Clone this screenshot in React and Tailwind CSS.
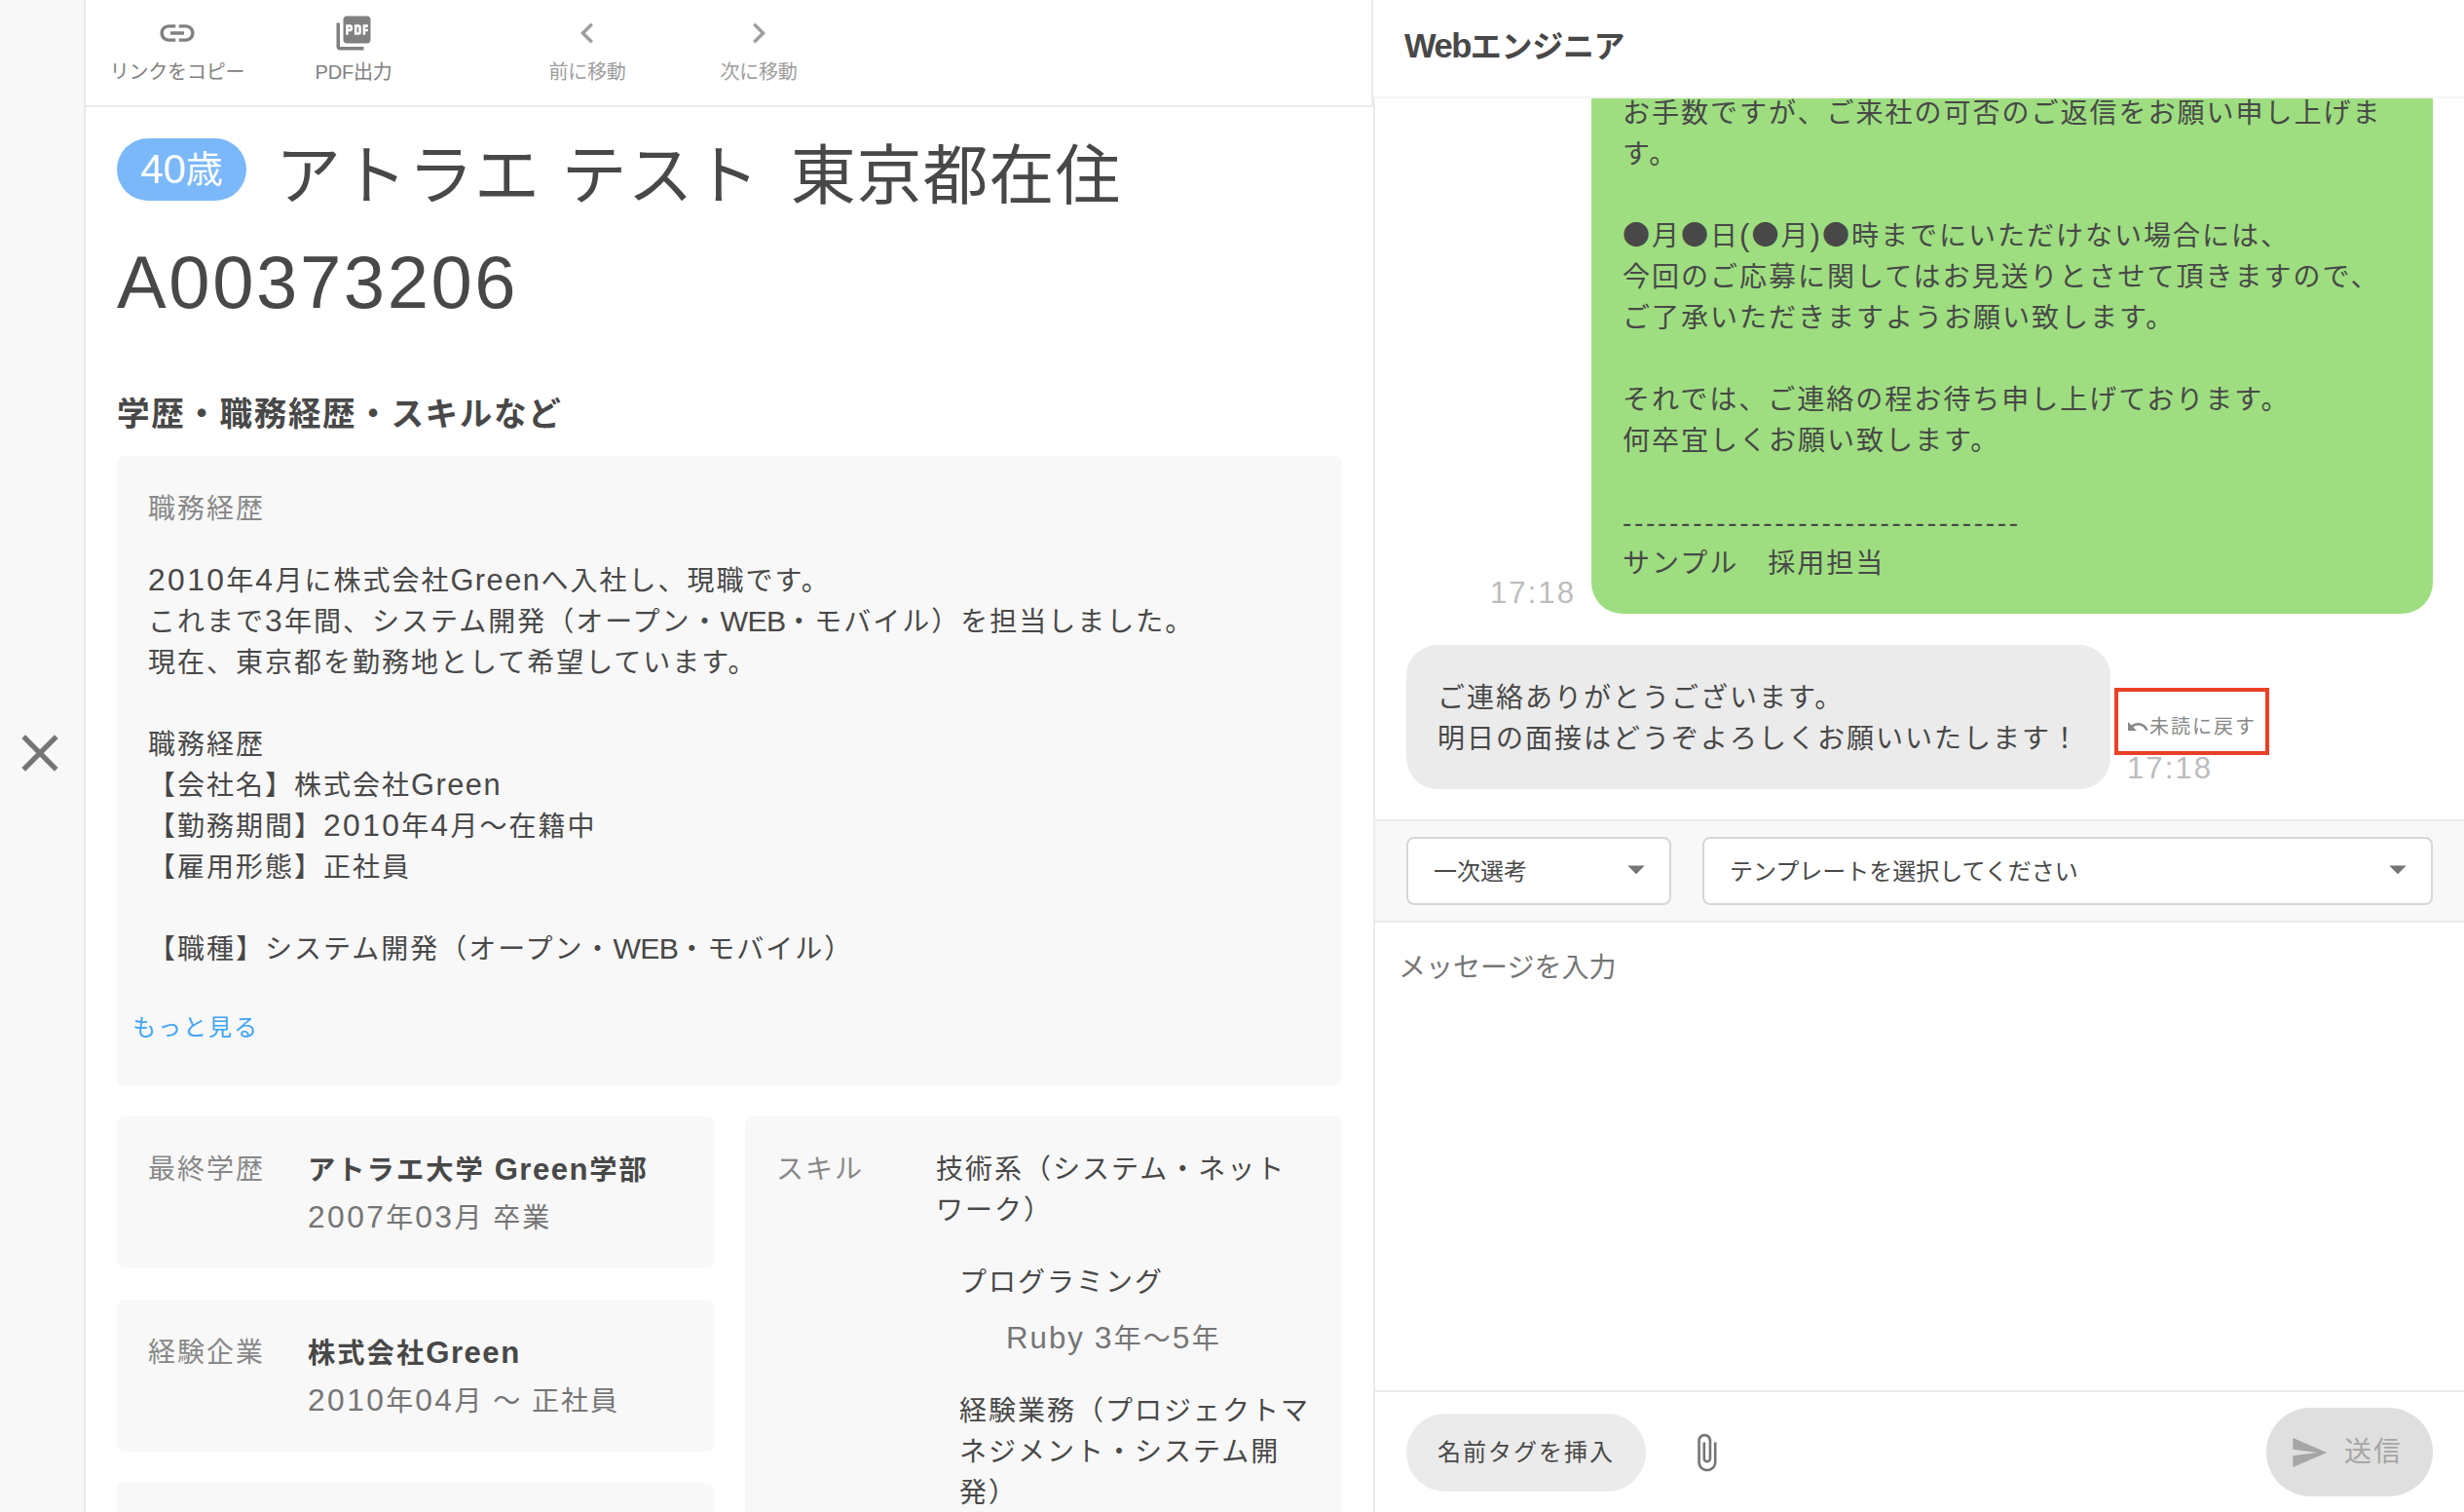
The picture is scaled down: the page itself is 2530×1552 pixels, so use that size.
import React, { useState } from 'react';
import {
	MdArrowDropDown,
	MdAttachFile,
	MdChevronLeft,
	MdChevronRight,
	MdClose,
	MdLink,
	MdPictureAsPdf,
	MdSend,
	MdUndo,
} from 'react-icons/md';

const HISTORY = [
	'2010年4月に株式会社Greenへ入社し、現職です。',
	'これまで3年間、システム開発（オープン・WEB・モバイル）を担当しました。',
	'現在、東京都を勤務地として希望しています。',
	'',
	'職務経歴',
	'【会社名】株式会社Green',
	'【勤務期間】2010年4月〜在籍中',
	'【雇用形態】正社員',
	'',
	'【職種】システム開発（オープン・WEB・モバイル）',
];

const SENT = [
	'お手数ですが、ご来社の可否のご返信をお願い申し上げま',
	'す。',
	'',
	'●月●日(●月)●時までにいただけない場合には、',
	'今回のご応募に関してはお見送りとさせて頂きますので、',
	'ご了承いただきますようお願い致します。',
	'',
	'それでは、ご連絡の程お待ち申し上げております。',
	'何卒宜しくお願い致します。',
	'',
	'----------------------------------',
	'サンプル　採用担当',
];

const RECEIVED = [
	'ご連絡ありがとうございます。',
	'明日の面接はどうぞよろしくお願いいたします！',
];

// Latin letters and digits are set a little larger than the kana around them
const partStyle = (part) => {
	if (part.startsWith('--')) return 'tracking-[2.7px]';
	if (part.startsWith('●')) return "font-['Noto_Sans_CJK_JP'] leading-none";
	if (/^\d+$/.test(part)) return 'text-[1.135em] leading-none tracking-[2.4px]';
	if (/^[A-Z]+$/.test(part)) return 'text-[1.08em] leading-none tracking-[-0.7px]';
	if (part === 'Green') return 'text-[1.1em] leading-none tracking-[1.5px]';
	if (part === 'Web') return 'text-[1.08em] leading-none tracking-[-1.5px]';
	return 'text-[1.115em] leading-none';
};

const Mixed = ({ text }) =>
	text.split(/([\x21-\x7e]+|●)/).map((part, index) => {
		if (index % 2 === 0) return part;
		return (
			<span key={index} className={partStyle(part)}>
				{part}
			</span>
		);
	});

const Lines = ({ lines }) =>
	lines.map((line, index) => (
		<p key={index} className="h-[42px] whitespace-pre">
			<Mixed text={line} />
		</p>
	));

const ToolButton = ({ icon: Icon, label, className }) => (
	<button
		type="button"
		className={`flex flex-col items-center text-xl leading-none tracking-[-0.2px] ${className}`}>
		<Icon className="h-[42px] w-[42px]" />
		<span className="mt-[9px] whitespace-nowrap">
			{label}
		</span>
	</button>
);

const InfoCard = ({ label, title, detail }) => (
	<div className="flex h-[156px] shrink-0 rounded-lg bg-[#f8f8f8] px-8 pt-[34px]">
		<h3 className="w-[164px] shrink-0 text-[#888]">{label}</h3>
		<div>
			<p className="text-[28.3px] font-bold whitespace-pre">
				<Mixed text={title} />
			</p>
			<p className="mt-2 whitespace-pre text-[#757575]">
				<Mixed text={detail} />
			</p>
		</div>
	</div>
);

const Select = ({ value, className }) => (
	<div
		className={`flex h-[70px] items-center justify-between rounded-lg border-2 border-[#d6d6d6] bg-white pr-[13px] pl-[26px] text-2xl tracking-normal ${className}`}>
		<span className="pt-0.5">{value}</span>
		<MdArrowDropDown className="-mt-1 h-[42px] w-[42px] text-[#757575]" />
	</div>
);

const Profile = () => (
	<section className="flex w-[1322px] shrink-0 flex-col overflow-hidden">
		<div className="flex h-[110px] shrink-0 border-r-2 border-b-2 border-[#ebebeb] pt-[13px] text-[#808080]">
			<ToolButton icon={MdLink} label="リンクをコピー" className="ml-[24px] w-[140px]" />
			<ToolButton icon={MdPictureAsPdf} label="PDF出力" className="ml-[71px] w-[80px]" />
			<ToolButton icon={MdChevronLeft} label="前に移動" className="ml-[160px] w-[80px] text-[#9e9e9e]" />
			<ToolButton icon={MdChevronRight} label="次に移動" className="ml-[96px] w-[80px] text-[#9e9e9e]" />
		</div>

		<div className="flex flex-col pr-8 pl-8">
			<div className="mt-4 flex h-[110px] items-center">
				<span className="-mt-[14px] flex h-16 w-[133px] items-center justify-center rounded-full bg-[#7bb8f9] text-[38px] tracking-normal whitespace-nowrap text-white">
					<span className="text-[42px] leading-none">40</span>歳
				</span>
				<h1 className="ml-[30px] text-[67px] leading-[110px] tracking-[1px] whitespace-pre [word-spacing:2px]">
					アトラエ テスト<span className="ml-[31px]">東京都在住</span>
				</h1>
			</div>
			<p className="h-[110px] pt-0.5 text-[66px] leading-[110px]">
				<span className="text-[76px] leading-none tracking-[2.6px]">
					A00373206
				</span>
			</p>

			<h2 className="mt-[59px] h-[42px] text-[33.6px] font-bold tracking-[1.6px]">
				学歴・職務経歴・スキルなど
			</h2>

			<div className="mt-[21px] h-[646px] w-[1258px] rounded-lg bg-[#f8f8f8] px-8 pt-[34px]">
				<h3 className="mb-8 text-[#888]">職務経歴</h3>
				<Lines lines={HISTORY} />
				<a className="-ml-4 mt-[38px] block text-2xl leading-[42px] text-[#42a5f5]">
					もっと見る
				</a>
			</div>

			<div className="mt-8 flex w-[1258px] gap-8">
				<div className="flex w-[613px] flex-col gap-8">
					<InfoCard label="最終学歴" title="アトラエ大学 Green学部" detail="2007年03月 卒業" />
					<InfoCard label="経験企業" title="株式会社Green" detail="2010年04月 〜 正社員" />
					<div className="h-[156px] rounded-lg bg-[#f8f8f8]"></div>
				</div>
				<div className="flex w-[613px] rounded-lg bg-[#f8f8f8] px-8 pt-[34px]">
					<h3 className="w-[164px] shrink-0 text-[#888]">スキル</h3>
					<div className="whitespace-pre">
						<Lines lines={['技術系（システム・ネット', 'ワーク）']} />
						<div className="mt-8 pl-6">
							<p>プログラミング</p>
							<p className="mt-4 pl-12 text-[#757575]">
								<Mixed text="Ruby 3年〜5年" />
							</p>
						</div>
						<div className="mt-8 pl-6">
							<Lines lines={['経験業務（プロジェクトマ', 'ネジメント・システム開', '発）']} />
						</div>
					</div>
				</div>
			</div>
		</div>
	</section>
);

const Chat = () => {
	const [message, setMessage] = useState('');

	return (
		<section className="flex min-w-0 flex-1 flex-col">
			<header className="flex h-[101px] shrink-0 items-center border-b-2 border-[#f4f4f4] pb-1 pl-8 text-[32px] font-bold tracking-[-0.3px]">
				<h2>
					<Mixed text="Webエンジニア" />
				</h2>
			</header>

			<div className="flex min-h-0 flex-1 flex-col border-l-2 border-[#ebebeb]">
				<div className="flex h-[740px] shrink-0 flex-col justify-end gap-8 overflow-hidden px-8 pb-[31px]">
					<div className="flex items-end justify-end gap-4">
						<time className="text-[31.2px] text-[#bdbdbd]">17:18</time>
						<div className="w-[864px] rounded-[32px] bg-[#9ede80] px-8 pt-[34px] pb-[30px]">
							<Lines lines={SENT} />
						</div>
					</div>
					<div className="flex items-end">
						<div className="w-[723px] rounded-[32px] bg-[#ebebeb] px-8 pt-[34px] pb-[30px]">
							<Lines lines={RECEIVED} />
						</div>
						<div className="ml-1">
							<button
								type="button"
								className="-mb-[7px] flex h-[69px] w-[159px] items-center border-4 border-[#ea4025] pt-[11px] pl-2 text-xl whitespace-nowrap text-[#888]">
								<MdUndo className="h-6 w-6 shrink-0" />
								<span>未読に戻す</span>
							</button>
							<time className="ml-[13px] block text-[31.2px] text-[#bdbdbd]">17:18</time>
						</div>
					</div>
				</div>

				<div className="flex h-[106px] shrink-0 gap-8 border-y-2 border-[#ebebeb] bg-[#f8f8f8] px-8 pt-4">
					<Select value="一次選考" className="w-[272px]" />
					<Select value="テンプレートを選択してください" className="w-[750px]" />
				</div>

				<textarea
					placeholder="メッセージを入力"
					className="h-[480px] shrink-0 resize-none px-6 pt-[26px] tracking-normal outline-none placeholder:text-[#757575]"
					value={message}
					onChange={(e) => setMessage(e.target.value)}
				/>

				<footer className="flex flex-1 items-center border-t-2 border-[#ebebeb] px-8">
					<button
						type="button"
						className="h-20 w-[246px] rounded-full bg-[#ebebeb] text-2xl">
						名前タグを挿入
					</button>
					<MdAttachFile className="ml-[41px] h-[42px] w-[42px] text-[#757575]" />
					<button
						type="button"
						disabled
						className="ml-auto flex h-[91px] w-[171px] items-center rounded-full bg-[#dfdfdf] pl-6 text-[#a6a6a6]">
						<MdSend className="h-10 w-10" />
						<span className="ml-4">送信</span>
					</button>
				</footer>
			</div>
		</section>
	);
};

const App = () => (
	<main className="flex h-[1552px] w-[2530px] overflow-hidden bg-white font-['Liberation_Sans','Noto_Sans_CJK_JP',sans-serif] text-[28px] leading-[42px] tracking-[2px] text-[#484848]">
		<aside className="flex w-[88px] shrink-0 items-center justify-center border-r-2 border-[#ebebeb] bg-[#f8f8f8] pr-1 pb-1.5">
			<MdClose className="h-16 w-16 shrink-0 text-[#757575]" />
		</aside>
		<Profile />
		<Chat />
	</main>
);

export default App;
